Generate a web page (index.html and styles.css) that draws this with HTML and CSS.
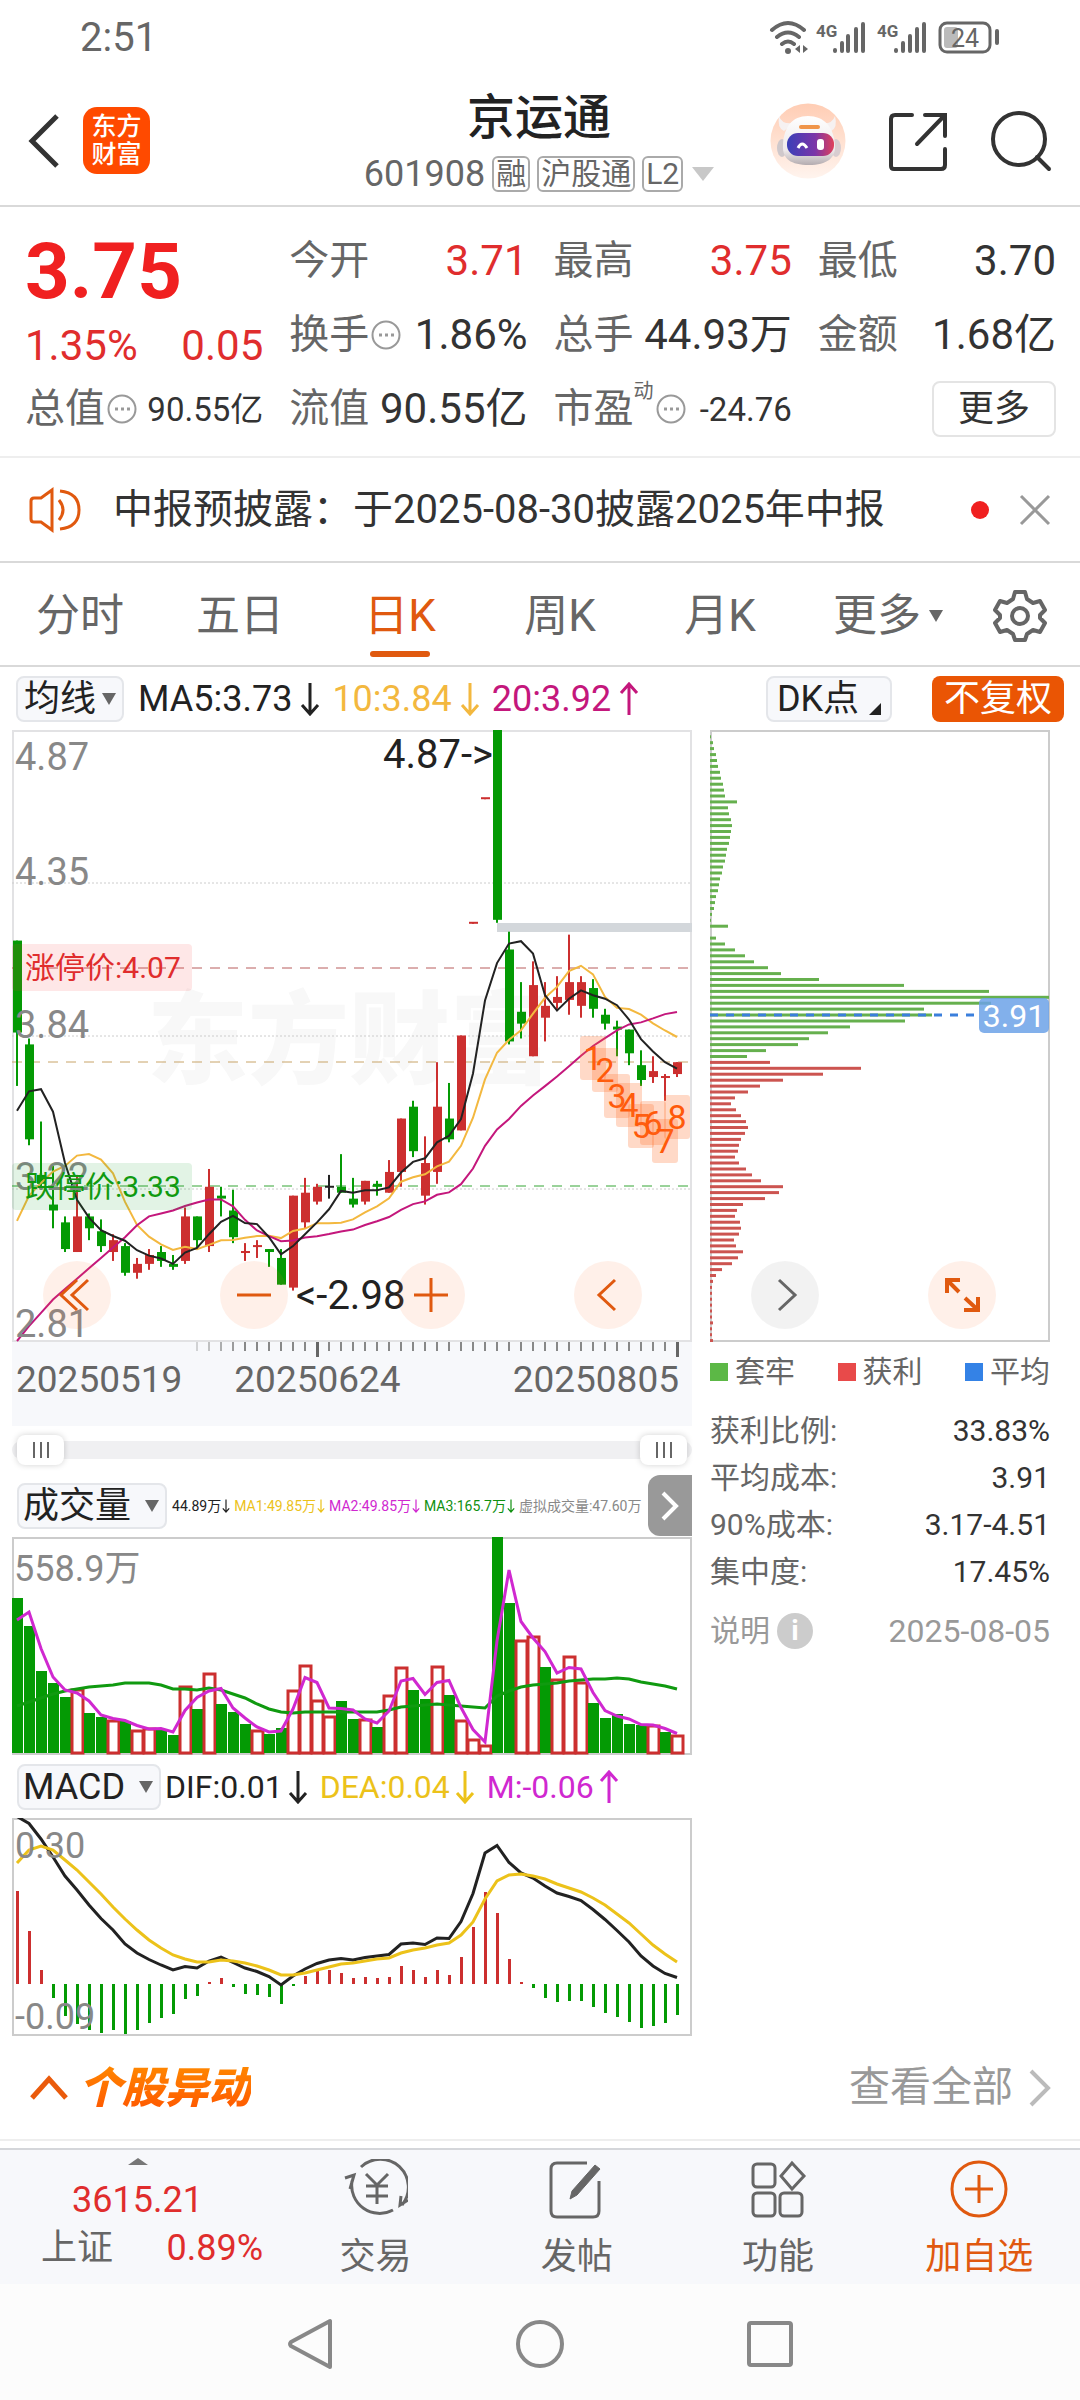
FILE: index.html
```html
<!DOCTYPE html>
<html lang="zh-CN">
<head>
<meta charset="utf-8">
<meta name="viewport" content="width=device-width, initial-scale=1">
<title>京运通 601908</title>
<link rel="stylesheet" href="styles.css">
</head>
<body>
<div class="status">
  <span class="status-time">2:51</span>
  <svg class="status-icons" viewBox="0 0 232 36" role="img" aria-label="信号与电量">
    <g fill="none" stroke="#666" stroke-width="4" stroke-linecap="round">
      <path d="M4 10Q20 -4 36 10M9 17Q20 8 31 17M14 24Q20 19 26 24"/>
      <path d="M67 31v-1M74 31v-8M80 31V16M88 31V9M95 31V4M128 31v-1M135 31v-8M142 31V16M149 31V9M156 31V4"/>
      <path d="M229 11v12"/>
      <rect x="172" y="3" width="50" height="29" rx="7" stroke-width="3"/>
    </g>
    <circle cx="20" cy="31" r="3" fill="#666"/>
    <path d="M32 25v8l-5-4zM35 25l5 4-5 4z" fill="#666"/>
    <rect x="176" y="7" width="14" height="21" rx="3" fill="#bbb"/>
    <text x="48" y="17" class="st-net">4G</text>
    <text x="109" y="17" class="st-net">4G</text>
    <text x="197" y="27" class="st-bat" text-anchor="middle">24</text>
  </svg>
</div>

<header class="header">
  <div class="header-left">
    <button class="icon-btn" aria-label="返回"><svg width="34" height="56" viewBox="0 0 34 56"><path d="M31 3L6 28l25 25" fill="none" stroke="#333" stroke-width="5"/></svg></button>
    <a class="logo" href="#">东方<br>财富</a>
  </div>
  <div class="header-title">
    <h1>京运通</h1>
    <div class="code"><span>601908</span><span class="tag">融</span><span class="tag">沪股通</span><span class="tag">L2</span><i class="tri tri-light"></i></div>
  </div>
  <div class="header-right">
    <button class="icon-btn" aria-label="智能助手">
      <svg width="76" height="76" viewBox="0 0 76 76">
        <defs>
          <linearGradient id="halo" x1="0" y1="0" x2="0" y2="1"><stop offset="0" stop-color="#ffcdb4"/><stop offset="1" stop-color="#fff4ee"/></linearGradient>
          <linearGradient id="visor"><stop offset="0" stop-color="#3a3fb8"/><stop offset=".6" stop-color="#7b35a8"/><stop offset="1" stop-color="#e0405a"/></linearGradient>
          <linearGradient id="shell" x1="0" y1="0" x2="0" y2="1"><stop offset="0" stop-color="#fff"/><stop offset=".7" stop-color="#eee9ea"/><stop offset="1" stop-color="#b4acb0"/></linearGradient>
        </defs>
        <circle cx="38" cy="38" r="37.500" fill="url(#halo)"/>
        <path d="M9 13q-2 12 5 15l10-8q-12 2-15-7zM65 13q3 12-4 15l-11-8q12 2 15-7z" fill="#f6f1f1"/>
        <ellipse cx="12" cy="45" rx="5" ry="9" fill="#cfc8cb"/><ellipse cx="66" cy="45" rx="5" ry="9" fill="#d8cdd0"/>
        <path d="M38 13C22 13 14 24 13 42c-1 14 8 20 26 20s27-7 26-20C64 24 54 13 38 13z" fill="url(#shell)"/>
        <rect x="29" y="22" width="21" height="4" rx="2" fill="#f0954a"/>
        <rect x="17" y="30" width="47" height="23" rx="11" fill="url(#visor)"/>
        <path d="M28 45q4-8 9 0" fill="none" stroke="#fff" stroke-width="3"/>
        <rect x="47" y="36" width="7" height="11" rx="3" fill="#fff"/>
      </svg>
    </button>
    <button class="icon-btn" aria-label="分享"><svg width="64" height="64" viewBox="0 0 64 64"><path d="M26 6H9Q5 6 5 10v47q0 3 3 3h47q4 0 4-4V40M39 6h20v21M58 7L31 35" fill="none" stroke="#333" stroke-width="4" stroke-linecap="round"/></svg></button>
    <button class="icon-btn" aria-label="搜索"><svg width="62" height="62" viewBox="0 0 62 62"><circle cx="29" cy="29" r="26" fill="none" stroke="#333" stroke-width="4"/><path d="M47 47l12 12" stroke="#333" stroke-width="4" stroke-linecap="round"/></svg></button>
  </div>
</header>

<section class="quote">
  <div class="quote-main">
    <strong class="price">3.75</strong>
    <div class="change"><span>1.35%</span><span>0.05</span></div>
  </div>
  <div class="cell"><span class="k">今开</span><span class="v up">3.71</span></div>
  <div class="cell"><span class="k">最高</span><span class="v up">3.75</span></div>
  <div class="cell"><span class="k">最低</span><span class="v">3.70</span></div>
  <div class="cell"><span class="k">换手<svg class="more-dot"><use href="#dots"/></svg></span><span class="v">1.86%</span></div>
  <div class="cell"><span class="k">总手</span><span class="v">44.93万</span></div>
  <div class="cell"><span class="k">金额</span><span class="v">1.68亿</span></div>
  <div class="cell"><span class="k">总值<svg class="more-dot"><use href="#dots"/></svg></span><span class="v small">90.55亿</span></div>
  <div class="cell"><span class="k">流值</span><span class="v">90.55亿</span></div>
  <div class="cell"><span class="k">市盈<sup>动</sup><svg class="more-dot"><use href="#dots"/></svg></span><span class="v small">-24.76</span></div>
  <div class="cell end"><button class="more">更多</button></div>
</section>
<svg class="defs" aria-hidden="true"><symbol id="dots" viewBox="0 0 30 30"><circle cx="15" cy="15" r="13.500" fill="none" stroke="#999" stroke-width="2"/><path d="M8 15h3M14 15h3M20 15h3" stroke="#999" stroke-width="3"/></symbol></svg>

<section class="notice">
  <svg width="52" height="48" viewBox="0 0 52 48" fill="none" stroke="#e0590f" stroke-width="3"><path d="M23 4L12 12H5q-3 0-3 3v18q0 3 3 3h7l11 8zM30 14q8 10 0 20M31 5q19 2 19 19T31 43"/></svg>
  <p>中报预披露：于2025-08-30披露2025年中报</p>
  <i class="dot"></i>
  <button class="icon-btn" aria-label="关闭"><svg width="32" height="32" viewBox="0 0 32 32"><path d="M2 2l28 28M30 2L2 30" stroke="#999" stroke-width="3"/></svg></button>
</section>

<nav class="tabs">
  <button>分时</button>
  <button>五日</button>
  <button class="active">日K</button>
  <button>周K</button>
  <button>月K</button>
  <button class="tab-more">更多<i class="tri tri-small"></i></button>
  <button class="gear" aria-label="设置"><svg width="56" height="56" viewBox="0 0 56 56" fill="none" stroke="#666" stroke-width="4" stroke-linejoin="round"><path d="M23 4h10l2 7 6 4 7-2 5 9-5 5v3l5 5-5 9-7-2-6 4-2 6H23l-2-6-6-4-7 2-5-9 5-5v-3l-5-5 5-9 7 2 6-4z"/><circle cx="28" cy="28" r="8"/></svg></button>
</nav>

<section class="ma-row">
  <button class="pill">均线<i class="tri"></i></button>
  <div class="figures">
    <span class="c-ink">MA5:3.73<svg class="arr"><use href="#down"/></svg></span>
    <span class="c-amber">10:3.84<svg class="arr"><use href="#down"/></svg></span>
    <span class="c-pink">20:3.92<svg class="arr"><use href="#upw"/></svg></span>
  </div>
  <button class="pill dk">DK点<i class="corner"></i></button>
  <button class="pill adjust">不复权</button>
</section>
<svg class="defs" aria-hidden="true">
  <symbol id="down" viewBox="0 0 20 34"><path d="M10 1v31M2 23l8 9 8-9" fill="none" stroke="currentColor" stroke-width="3"/></symbol>
  <symbol id="upw" viewBox="0 0 20 34"><path d="M10 33V2M2 11l8-9 8 9" fill="none" stroke="currentColor" stroke-width="3"/></symbol>
</svg>

<main class="market">
  <div class="charts">
    <svg id="kline" class="plot" viewBox="0 0 680 612"></svg>
    <div class="dates">
      <svg id="ticks" class="plot" viewBox="0 0 680 16"></svg>
      <div class="date-labels"><span>20250519</span><span>20250624</span><span>20250805</span></div>
    </div>
    <div class="range">
      <input type="range" min="0" max="100" value="0" aria-label="起始日期">
      <input type="range" min="0" max="100" value="100" aria-label="结束日期">
    </div>
    <div class="sub-head">
      <button class="pill">成交量<i class="tri"></i></button>
      <div class="vol-figures">
        <span class="c-ink">44.89万<svg class="arr"><use href="#down"/></svg></span>
        <span class="c-gold">MA1:49.85万<svg class="arr"><use href="#down"/></svg></span>
        <span class="c-violet">MA2:49.85万<svg class="arr"><use href="#down"/></svg></span>
        <span class="c-green">MA3:165.7万<svg class="arr"><use href="#down"/></svg></span>
        <span class="c-grey">虚拟成交量:47.60万</span>
      </div>
      <button class="expand" aria-label="展开"><svg width="20" height="32" viewBox="0 0 20 32"><path d="M3 3l13 13L3 29" fill="none" stroke="#fff" stroke-width="4"/></svg></button>
    </div>
    <svg id="volume" class="plot" viewBox="0 0 680 218"></svg>
    <div class="sub-head">
      <button class="pill">MACD<i class="tri"></i></button>
      <div class="macd-figures">
        <span class="c-ink">DIF:0.01<svg class="arr"><use href="#down"/></svg></span>
        <span class="c-gold">DEA:0.04<svg class="arr"><use href="#down"/></svg></span>
        <span class="c-violet">M:-0.06<svg class="arr"><use href="#upw"/></svg></span>
      </div>
    </div>
    <svg id="macd" class="plot" viewBox="0 0 680 218"></svg>
  </div>

  <aside class="chips">
    <svg id="chips" class="plot" viewBox="0 0 340 612"></svg>
    <div class="legend"><span><i class="sw-green"></i>套牢</span><span><i class="sw-red"></i>获利</span><span><i class="sw-blue"></i>平均</span></div>
    <dl class="stats">
      <div><dt>获利比例:</dt><dd>33.83%</dd></div>
      <div><dt>平均成本:</dt><dd>3.91</dd></div>
      <div><dt>90%成本:</dt><dd>3.17-4.51</dd></div>
      <div><dt>集中度:</dt><dd>17.45%</dd></div>
    </dl>
    <div class="note"><span>说明<b>i</b></span><time>2025-08-05</time></div>
  </aside>

  <div class="floaters">
    <button aria-label="最左"><svg viewBox="0 0 68 68"><path d="M34 19L18 34l16 15M45 19L29 34l16 15"/></svg></button>
    <button aria-label="缩小"><svg viewBox="0 0 68 68"><path d="M17 34h34"/></svg></button>
    <button aria-label="放大"><svg viewBox="0 0 68 68"><path d="M17 34h34M34 17v34"/></svg></button>
    <button aria-label="左移"><svg viewBox="0 0 68 68"><path d="M41 19L25 34l16 15"/></svg></button>
    <button class="muted" aria-label="右移"><svg viewBox="0 0 68 68"><path d="M28 19l16 15-16 15"/></svg></button>
    <button class="full" aria-label="全屏"><svg viewBox="0 0 68 68"><path d="M19 32V19h13M19 19l12 12M36 49h14V36M50 49L37 37"/></svg></button>
  </div>
</main>

<section class="events">
  <h2><svg width="40" height="26" viewBox="0 0 40 26"><path d="M3 23L20 4l17 19" fill="none" stroke="#ea5b0c" stroke-width="5"/></svg><span>个股异动</span></h2>
  <a href="#">查看全部<svg width="22" height="38" viewBox="0 0 22 38"><path d="M2 2l17 17L2 36" fill="none" stroke="#bbb" stroke-width="4"/></svg></a>
</section>

<footer class="bottom">
  <button class="index">
    <i class="caret"></i>
    <span class="up">3615.21</span>
    <span class="index-row"><span>上证</span><span class="up">0.89%</span></span>
  </button>
  <button class="item"><svg viewBox="0 0 64 60"><path d="M17 8A28 28 0 0 1 58 46M49 51A28 28 0 0 1 8 22M1 19l9-3-4 14M57 37l-1 9 8-5M22 15l11 11 11-11M33 26v19M22 27h22M22 37h22"/></svg>交易</button>
  <button class="item"><svg viewBox="0 0 64 60"><path d="M42 4H12q-6 0-6 6v42q0 6 6 6h36q6 0 6-6V22"/><path d="M25 40l2-8L50 6l5 4-23 26z" fill="#666" stroke-width="1"/></svg>发帖</button>
  <button class="item"><svg viewBox="0 0 64 60"><rect x="7" y="5" width="22" height="23" rx="4"/><rect x="7" y="34" width="22" height="23" rx="4"/><rect x="34" y="34" width="22" height="23" rx="4"/><path d="M46 4l12 13-12 13-11-13z"/></svg>功能</button>
  <button class="item add"><svg viewBox="0 0 64 60"><circle cx="32" cy="30" r="27"/><path d="M18 30h28M32 16v28"/></svg>加自选</button>
</footer>
<div class="system">
  <svg viewBox="0 0 48 56"><path d="M44 5v46L5 30q-2-2 0-4z"/></svg>
  <svg viewBox="0 0 48 56"><circle cx="24" cy="28" r="22"/></svg>
  <svg viewBox="0 0 48 56"><rect x="3" y="7" width="42" height="42" rx="2"/></svg>
</div>
<script src="charts.js"></script>
</body>
</html>
```

FILE: styles.css
```css
* { box-sizing: border-box; }
body {
  margin: 0;
  background: #fff;
  color: #333;
  font-family: Roboto, "Noto Sans CJK SC", sans-serif;
  font-size: 36px;
  line-height: 1;
}
button {
  margin: 0; padding: 0; border: 0; background: none;
  font: inherit; color: inherit; cursor: pointer;
}
a { color: inherit; text-decoration: none; }
svg { display: block; }
.defs { position: absolute; width: 0; height: 0; }
.icon-btn { display: flex; }
.up { color: #e02d2d; }

/* status bar */
.status {
  display: flex; justify-content: space-between; align-items: center;
  height: 76px; padding: 0 80px; color: #666;
}
.status-time { font-size: 40px; }
.status-icons { width: 232px; height: 36px; }
.st-net { font-size: 17px; font-weight: 700; fill: #666; }
.st-bat { font-size: 25px; fill: #666; }

/* header */
.header {
  display: grid; grid-template-columns: 1fr auto 1fr; align-items: center;
  height: 131px; padding: 0 28px 0 26px; border-bottom: 2px solid #d9d9d9;
}
.header-left { display: flex; align-items: center; gap: 23px; }
.logo {
  display: flex; align-items: center; justify-content: center;
  width: 67px; height: 67px; border-radius: 14px; background: #ff4a00; color: #fff;
  font-size: 25px; font-weight: 500; line-height: 28px;
}
.header-title { display: flex; flex-direction: column; align-items: center; gap: 10px; padding-top: 4px; }
h1 { margin: 0; font-size: 48px; font-weight: 500; line-height: 52px; color: #222; }
.code { display: flex; align-items: center; gap: 7px; color: #666; line-height: 40px; }
.tag {
  padding: 0 2px; border: 2px solid #aaa; border-radius: 6px;
  font-size: 30px; line-height: 32px;
}
.header-right { display: flex; justify-content: flex-end; align-items: center; gap: 40px; }
.tri {
  display: inline-block; width: 0; height: 0;
  border: 7px solid transparent; border-top: 12px solid #666; border-bottom: 0;
}
.tri-light { border-width: 14px 11px 0; border-top-color: #c8c8c8; margin-left: 2px; }
.tri-small { margin-left: 8px; }

/* quote */
.quote {
  display: grid; grid-template-columns: repeat(4, 1fr); grid-auto-rows: 74px; column-gap: 26px;
  padding: 17px 24px 10px 25px; border-bottom: 2px solid #eee;
}
.quote-main { grid-row: span 2; color: #f02020; }
.price { display: block; font-size: 78px; line-height: 96px; font-weight: 700; }
.change { display: flex; justify-content: space-between; font-size: 42px; line-height: 52px; color: #e02d2d; }
.cell { display: flex; justify-content: space-between; align-items: center; white-space: nowrap; }
.cell.end { justify-content: flex-end; }
.k { display: flex; align-items: center; font-size: 40px; color: #666; }
.k sup { align-self: flex-start; margin-top: -8px; font-size: 20px; line-height: 20px; }
.v { font-size: 42px; }
.v.small { font-size: 33px; }
.v.up { color: #e02d2d; }
.more-dot { width: 30px; height: 30px; margin-left: 2px; }
.more { width: 124px; height: 56px; border: 2px solid #e4e4e4; border-radius: 8px; font-size: 36px; }

/* notice */
.notice { display: flex; align-items: center; height: 105px; padding: 0 29px; border-bottom: 2px solid #d9d9d9; }
.notice p { flex: 1; margin: 0 0 0 32px; font-size: 40px; white-space: nowrap; }
.dot { width: 18px; height: 18px; margin-right: 30px; border-radius: 50%; background: #f02020; }

/* tabs */
.tabs { display: grid; grid-template-columns: repeat(6, 1fr) 120px; height: 104px; border-bottom: 2px solid #d9d9d9; color: #666; font-size: 44px; }
.tabs button { position: relative; display: flex; align-items: center; justify-content: center; padding-top: 4px; }
.tabs .tab-more { padding-left: 16px; }
.tabs .active { color: #e0590f; }
.tabs .active::after {
  content: ""; position: absolute; bottom: 8px; left: 50%; width: 60px; height: 6px; margin-left: -30px;
  border-radius: 3px; background: #e0590f;
}

/* indicator rows */
.pill {
  display: flex; align-items: center; justify-content: center; flex: none; gap: 6px;
  height: 46px; padding: 0 6px; border: 2px solid #e4e6ea; border-radius: 8px; background: #f7f8fb;
  font-size: 36px; color: #222; white-space: nowrap;
}
.ma-row { display: flex; align-items: center; height: 63px; padding: 0 16px; gap: 14px; }
.ma-row .figures { flex: 1; display: flex; gap: 12px; }
.figures span, .vol-figures span, .macd-figures span { display: flex; align-items: center; white-space: nowrap; }
.arr { width: 20px; height: 34px; margin-left: 8px; }
.pill.dk { width: 126px; gap: 10px; }
.corner { width: 0; height: 0; align-self: flex-end; margin-bottom: 5px; border-left: 12px solid transparent; border-bottom: 12px solid #222; }
.adjust { width: 132px; margin-left: 26px; border: 0; background: #ea5504; color: #fff; }
.c-ink { color: #222; }
.c-amber { color: #f3b83f; }
.c-pink { color: #c4177c; }
.c-gold { color: #ecc21a; }
.c-violet { color: #d028d0; }
.c-green { color: #109010; }
.c-grey { color: #888; }

/* market area */
.market { position: relative; display: grid; grid-template-columns: 2fr 1fr; gap: 18px; padding: 0 30px 0 12px; }
.charts, .chips { min-width: 0; }
.plot { width: 100%; height: auto; overflow: hidden; }
.dates { height: 84px; background: #f7f8fb; }
.date-labels { display: flex; justify-content: space-between; padding: 3px 13px 0 4px; font-size: 37px; line-height: 38px; color: #666; }
.date-labels span:nth-child(2) { margin-right: 60px; }
.range { position: relative; height: 48px; }
.range::before { content: ""; position: absolute; inset: 15px 0; border-radius: 9px; background: #f0f0f2; }
.range input {
  position: absolute; inset: 0; width: 100%; height: 100%; margin: 0; padding: 0 5px;
  appearance: none; background: none; pointer-events: none;
}
.range input::-webkit-slider-thumb {
  appearance: none; width: 47px; height: 30px; border-radius: 8px; pointer-events: auto;
  background: linear-gradient(#666, #666) 16px 50% / 2px 16px no-repeat,
    linear-gradient(#666, #666) 23px 50% / 2px 16px no-repeat,
    linear-gradient(#666, #666) 30px 50% / 2px 16px no-repeat, #fff;
  box-shadow: 0 0 6px rgba(0, 0, 0, .18);
}
.sub-head { display: flex; align-items: center; height: 63px; padding-left: 5px; }
.sub-head .pill { gap: 14px; padding: 0 6px 0 4px; }
.vol-figures { flex: 1; display: flex; gap: 4px; min-width: 0; margin-left: 5px; font-size: 14px; }
.vol-figures .arr { width: 8px; height: 16px; margin-left: 1px; }
.macd-figures { display: flex; gap: 12px; margin-left: 4px; font-size: 32px; }
.macd-figures .arr { margin-left: 5px; }
.expand { display: flex; align-items: center; justify-content: center; flex: none; width: 44px; height: 61px; border-radius: 12px 0 0 12px; background: #999; }

/* chart text */
.axis { font-size: 38px; fill: #888; }
.axis-s { font-size: 36px; fill: #888; }
.mark { font-size: 40px; fill: #222; }
.limit { font-size: 30px; }
.wm { font-size: 101px; font-weight: 900; fill: #f8f8f8; }
.seq { font-size: 34px; fill: #ff5a0a; }
.avg { font-size: 32px; fill: #fff; }

/* chip distribution */
.legend { display: flex; justify-content: space-between; margin-top: 14px; font-size: 30px; line-height: 32px; color: #666; }
.legend span { display: flex; align-items: center; gap: 7px; }
.legend i { width: 18px; height: 18px; }
.sw-green { background: #5cb846; }
.sw-red { background: #e84a4a; }
.sw-blue { background: #3482e6; }
.stats { margin: 19px 0 0; font-size: 30px; line-height: 47px; }
.stats div, .note { display: flex; justify-content: space-between; align-items: center; }
.stats dt { color: #666; }
.stats dd { margin: 0; }
.note { margin-top: 18px; font-size: 30px; line-height: 36px; color: #999; }
.note span { display: flex; align-items: center; gap: 7px; }
.note b { width: 36px; height: 36px; border-radius: 50%; background: #ccc; color: #fff; font-size: 28px; text-align: center; }
.note time { font-size: 32px; }

/* round controls over the charts */
.floaters { position: absolute; top: 531px; left: 43px; right: 84px; display: flex; justify-content: space-between; pointer-events: none; }
.floaters button { width: 68px; height: 68px; border-radius: 50%; background: rgba(255, 110, 40, .1); pointer-events: auto; }
.floaters path { fill: none; stroke: #e0590f; stroke-width: 3; }
.floaters .full path { stroke-width: 4; }
.floaters .muted { background: rgba(0, 0, 0, .05); }
.floaters .muted path { stroke: #666; }

/* events */
.events { display: flex; justify-content: space-between; align-items: center; height: 105px; padding: 0 29px; border-bottom: 2px solid #eee; }
.events h2 { display: flex; align-items: center; gap: 10px; margin: 0; font-size: 43px; font-weight: 900; font-style: italic; line-height: 50px; }
.events h2 span { background: linear-gradient(#ff8a00, #ff5500); background-clip: text; -webkit-background-clip: text; color: transparent; }
.events a { display: flex; align-items: center; gap: 16px; font-size: 41px; color: #999; }

/* bottom bar */
.bottom { display: grid; grid-template-columns: 275px repeat(4, 1fr); height: 136px; margin-top: 7px; border-top: 2px solid #d4d6da; background: #f7f8fb; color: #666; }
.index { display: flex; flex-direction: column; align-items: center; padding-top: 8px; line-height: 48px; }
.index .caret { border: 10px solid transparent; border-top: 0; border-bottom: 7px solid #777; margin-bottom: 11px; }
.index-row { display: flex; align-self: stretch; justify-content: space-between; padding: 0 12px 0 41px; }
.item { display: flex; flex-direction: column; align-items: center; gap: 20px; padding-top: 9px; }
.item svg { width: 64px; height: 60px; fill: none; stroke: #666; stroke-width: 3; }
.item.add { color: #e0590f; }
.item.add svg { stroke: #e0590f; }
.system { display: flex; justify-content: center; align-items: center; gap: 182px; height: 119px; background: #fcfcfc; }
.system svg { width: 48px; height: 56px; fill: none; stroke: #888; stroke-width: 4; stroke-linejoin: round; }
```

FILE: charts.js
```js
// Daily bars: open, high, low, close.
const bars = [
  [4.16,4.16,3.67,3.85],[3.81,3.83,3.47,3.49],[3.37,3.55,3.32,3.34],[3.27,3.40,3.19,3.25],
  [3.21,3.23,3.11,3.12],[3.11,3.37,3.11,3.23],[3.23,3.24,3.15,3.19],[3.18,3.22,3.11,3.13],
  [3.11,3.17,3.08,3.15],[3.13,3.14,3.03,3.04],[3.04,3.09,3.02,3.07],[3.07,3.12,3.05,3.10],
  [3.11,3.13,3.06,3.08],[3.07,3.10,3.05,3.06],[3.08,3.26,3.07,3.23],[3.23,3.23,3.12,3.15],
  [3.13,3.39,3.11,3.33],[3.30,3.33,3.23,3.29],[3.25,3.32,3.14,3.16],[3.11,3.14,3.08,3.11],
  [3.13,3.15,3.09,3.13],[3.12,3.12,3.06,3.11],[3.09,3.12,3.00,3.00],[2.99,3.30,2.98,3.30],
  [3.21,3.36,3.19,3.31],[3.28,3.34,3.27,3.33],[3.33,3.37,3.29,3.33],[3.33,3.44,3.31,3.31],
  [3.29,3.36,3.26,3.27],[3.28,3.35,3.27,3.35],[3.34,3.35,3.30,3.33],[3.31,3.42,3.31,3.38],
  [3.38,3.56,3.33,3.56],[3.60,3.62,3.43,3.45],[3.30,3.50,3.27,3.41],[3.38,3.75,3.34,3.60],
  [3.56,3.68,3.48,3.49],[3.52,3.84,3.52,3.84],[4.22,4.22,4.22,4.22],[4.64,4.64,4.64,4.64],
  [4.87,4.87,4.22,4.23],[4.13,4.19,3.81,3.82],[3.92,4.02,3.83,3.88],[3.77,4.09,3.77,4.01],
  [3.90,4.02,3.82,3.94],[3.95,4.04,3.93,3.97],[3.96,4.18,3.91,4.02],[3.94,4.04,3.90,4.02],
  [4.00,4.03,3.90,3.93],[3.91,3.93,3.86,3.88],[3.87,3.89,3.77,3.86],[3.86,3.86,3.74,3.78],
  [3.74,3.79,3.67,3.69],[3.70,3.77,3.68,3.72],[3.70,3.71,3.62,3.70],[3.71,3.75,3.70,3.75]
];
const volumes = [155,127,82,70,56,64,40,36,33,32,23,25,24,18,67,44,80,49,41,29,23,19,25,63,88,53,37,52,34,34,26,58,86,63,54,87,58,33,14,8,216,150,113,117,86,74,97,71,50,35,39,29,28,28,21,18];
const volumeLong = [47,51,55,59,62,64,66,67,68,70,70,70,68,64,64,63,65,63,59,55,49,44,41,40,41,41,41,41,41,41,41,43,46,47,48,49,48,47,46,45,57,62,66,68,69,70,72,73,74,74,75,74,71,69,67,64];
const macdBars = [93,53,14,-14,-32,-40,-46,-49,-46,-50,-46,-39,-34,-30,-15,-12,2,6,-3,-10,-11,-13,-20,-2,8,13,14,11,6,7,6,7,18,14,7,14,9,27,57,92,71,25,2,-4,-14,-18,-17,-17,-23,-29,-33,-38,-44,-42,-39,-31];
const dea = [121,134,138,134,124,114,102,90,77,65,54,44,36,29,25,22,22,24,23,21,18,14,9,9,11,14,17,20,21,23,25,26,31,34,36,39,41,49,62,85,103,109,110,108,105,100,96,92,86,79,70,61,50,39,30,22];
const chipRows = [1,3,4,6,7,8,10,11,13,14,15,27,18,19,21,22,21,20,19,17,16,15,13,12,10,9,8,6,5,4,2,1,18,0,6,15,25,35,44,58,71,109,194,279,339,281,214,222,195,140,118,99,88,56,37,60,151,113,73,50,38,25,21,26,31,36,38,35,31,29,28,25,29,36,42,51,73,69,55,33,27,25,30,31,29,24,26,33,28,22,12,6,3,2,2,2,2,2,2,3,2,2,3];
const firstProfitRow = 55;

const RED = '#cc2f2f', GREEN = '#049a04', INK = '#222';
const x = i => 5 + 12 * i;
const y = p => (4.87 - p) / 2.06 * 611;
const rect = (a, b, w, h, fill, extra = '') => `<rect x="${a}" y="${b}" width="${w}" height="${h}" fill="${fill}" ${extra}/>`;
const line = (a, b, c, d, stroke, w = 2, extra = '') => `<path d="M${a} ${b}L${c} ${d}" stroke="${stroke}" stroke-width="${w}" ${extra}/>`;
const text = (a, b, cls, s, extra = '') => `<text x="${a}" y="${b}" class="${cls}" ${extra}>${s}</text>`;
const curve = (ys, stroke, w = 3) => `<polyline points="${ys.map((v, i) => x(i) + ',' + v.toFixed(1)).join(' ')}" fill="none" stroke="${stroke}" stroke-width="${w}"/>`;
const frame = (w, h, c) => rect(1, 1, w - 2, h - 2, 'none', `stroke="${c}" stroke-width="2"`);
const put = (id, s) => { document.getElementById(id).innerHTML = s; };

// Moving average; the values before the first full window come from earlier days.
function average(n, seed) {
  return bars.map((_, i) => i < seed.length ? seed[i]
    : bars.slice(i - n + 1, i + 1).reduce((s, b) => s + b[3], 0) / n);
}
const ma5 = average(5, [3.586, 3.652, 3.659, 3.583]);
const ma10 = average(10, [3.215, 3.30, 3.343, 3.381, 3.40, 3.435, 3.44, 3.422, 3.375]);
const ma20 = average(20, [2.81, 2.86, 2.905, 2.95, 2.985, 3.02, 3.055, 3.09, 3.125, 3.16, 3.20, 3.23, 3.24, 3.25, 3.265, 3.277, 3.287, 3.287, 3.264]);
const rising = bars.map((b, i) => i > 0 && b[3] >= bars[i - 1][3]);

function drawKline() {
  let s = text(135, 346, 'wm', '东方财富') + frame(680, 612, '#e2e2e4');
  for (const g of [153, 306, 459]) s += line(0, g, 680, g, '#ccc', 1, 'stroke-dasharray="2 2"');
  s += line(0, 238, 680, 238, '#b85c5c', 1, 'stroke-dasharray="10 8"');
  s += line(0, 332, 680, 332, '#c8a468', 1, 'stroke-dasharray="10 8"');
  s += line(0, 456, 680, 456, '#35a535', 1, 'stroke-dasharray="10 8"');
  s += rect(485, 193, 195, 9, '#d3d7db');
  bars.forEach(([o, h, l, c], i) => {
    const flat = o === c;
    const color = i === 26 ? INK : (flat ? RED : c > o ? RED : GREEN);
    const top = y(Math.max(o, c));
    s += rect(x(i) - 1, y(h), 2, Math.max(y(l) - y(h), 1), color);
    s += rect(x(i) - 4, flat ? top - 1 : top, 9, Math.max(y(Math.min(o, c)) - top, 2), color);
  });
  s += curve(ma10.map(y), '#f3b83f', 2) + curve(ma20.map(y), '#c4177c', 2) + curve(ma5.map(y), INK, 2);
  [['4.87', 40], ['4.35', 155], ['3.84', 308], ['3.22', 460], ['2.81', 607]].forEach(([t, b]) => { s += text(3, b, 'axis', t); });
  s += rect(0, 214, 180, 47, 'rgba(250,60,60,.12)', 'rx="4"') + text(13, 248, 'limit', '涨停价:4.07', 'fill="#e02d2d"');
  s += rect(0, 433, 180, 47, 'rgba(20,160,40,.12)', 'rx="4"') + text(13, 467, 'limit', '跌停价:3.33', 'fill="#109a10"');
  s += text(481, 38, 'mark', '4.87-&gt;', 'text-anchor="end"') + text(284, 579, 'mark', '&lt;-2.98');
  [328, 340, 366, 375, 396, 393, 411, 387].forEach((cy, n) => {
    s += rect(x(48 + n) - 13, cy - 22, 26, 44, 'rgba(255,110,40,.26)', 'rx="3"');
    s += text(x(48 + n), cy + 12, 'seq', n + 1, 'text-anchor="middle"');
  });
  put('kline', s);
}

function drawTicks() {
  let s = '';
  for (let i = 15; i < 56; i++) {
    const major = i === 25 || i === 55;
    s += rect(x(i) - 1, 0, major ? 3 : 2, major ? 15 : 9, major ? '#666' : '#888', `opacity="${Math.min(1, (i - 13) / 6)}"`);
  }
  put('ticks', s);
}

function drawVolume() {
  let s = frame(680, 218, '#ccc');
  volumes.forEach((v, i) => {
    s += rising[i] ? rect(x(i) - 5, 217 - v, 11, v - 1, '#fff', `stroke="${RED}" stroke-width="3"`)
      : rect(x(i) - 5, 216 - v, 11, v, GREEN);
  });
  const short = volumes.map((v, i) => 216 - (i ? (v + volumes[i - 1]) / 2 : 133));
  s += curve(volumeLong.map(v => 216 - v), '#109a10') + curve(short, '#d028d0');
  put('volume', s + text(2, 44, 'axis-s', '558.9万'));
}

function drawMacd() {
  let s = frame(680, 218, '#ccc');
  macdBars.forEach((v, i) => {
    s += rect(x(i) - 1, v > 0 ? 166 - v : 166, 3, Math.abs(v), v > 0 ? RED : GREEN);
  });
  s += curve(dea.map((v, i) => 166 - v - macdBars[i] / 2), INK) + curve(dea.map(v => 166 - v), '#ecc21a');
  put('macd', s + text(3, 40, 'axis-s', '0.30') + text(3, 211, 'axis-s', '-0.09'));
}

function drawChips() {
  let s = frame(340, 612, '#ccc');
  chipRows.forEach((w, i) => {
    s += rect(0, (5.3 + i * 5.92).toFixed(1), w, 3, i < firstProfitRow ? '#66b04e' : '#cc5450');
  });
  s += line(0, 285, 268, 285, '#3b7fdc', 3, 'stroke-dasharray="8 8"');
  s += rect(269, 268, 70, 35, 'rgba(108,162,232,.85)', 'rx="5"') + text(304, 297, 'avg', '3.91', 'text-anchor="middle"');
  put('chips', s);
}

drawKline();
drawTicks();
drawVolume();
drawMacd();
drawChips();
```
